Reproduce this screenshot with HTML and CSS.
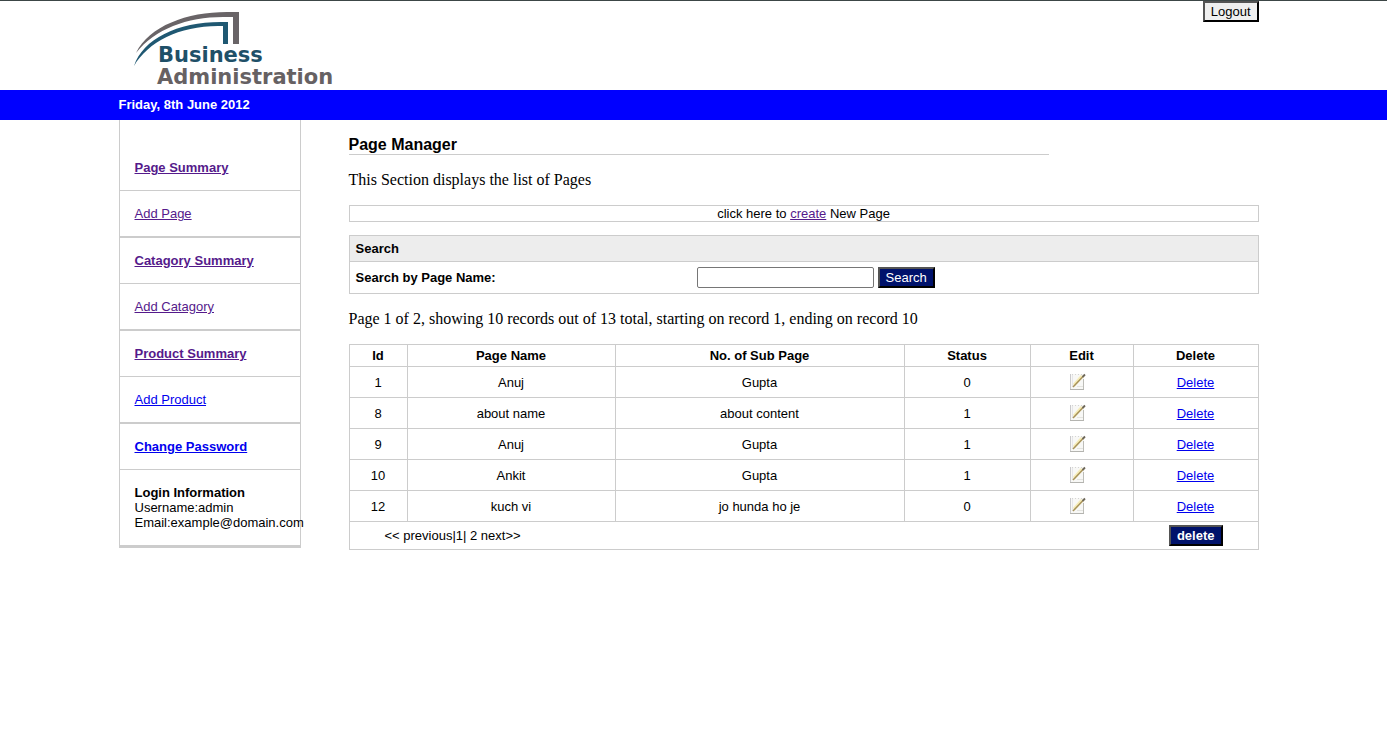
FILE: index.html
```html
<!DOCTYPE html>
<html lang="en">
<head>
<meta charset="utf-8">
<title>Page Manager</title>
<link rel="stylesheet" href="styles.css">
</head>
<body>
<svg class="defs" aria-hidden="true">
  <symbol id="edit" viewBox="0 0 26 22">
    <path d="M1 3h14v15H1z" fill="#f8f8f6"/>
    <path d="M1.500 3v15" stroke="#c9c9cc"/>
    <path d="M3.500 4v12" stroke="#e6e6ea"/>
    <path d="M1 18.500h14" stroke="#b4b4b0" />
    <path d="M14.500 8v10" stroke="#bdbdb8"/>
    <path d="M3 3.500h10" stroke="#d4d4d4" stroke-dasharray="1 2"/>
    <path d="M8 15.500h6" stroke="#e4e4e0"/>
    <path d="M5 14L13 5" stroke="#f6ecb8" stroke-width="3"/>
    <path d="M4 16L15 4.500" stroke="#a8935a" stroke-width="1.500"/>
    <path d="M13.500 6L16 3.500" stroke="#6d675a" stroke-width="1.800"/>
  </symbol>
</svg>
<header class="header">
  <div class="container header-row">
    <svg class="logo" width="220" height="78" viewBox="0 0 220 78" role="img" aria-label="Business Administration">
      <path d="M17 41C30 14 68 0 108 0h12v32h-6V5h-10C68 5 36 17 17 41z" fill="#696467"/>
      <path d="M15 54C24 27 58 10 102 10h7v22h-5V14h-5C60 14 29 30 15 54z" fill="#1f5872"/>
      <text x="39" y="50" class="logo-text logo-blue">Business</text>
      <text x="38" y="72" class="logo-text logo-gray">Administration</text>
    </svg>
    <button type="button" class="button logout">Logout</button>
  </div>
</header>
<div class="datebar"><div class="container">Friday, 8th June 2012</div></div>
<div class="container layout">
  <nav class="sidebar">
    <div class="item first"><a class="visited" href="#"><b>Page Summary</b></a></div>
    <div class="item last"><a class="visited" href="#">Add Page</a></div>
    <div class="item"><a class="visited" href="#"><b>Catagory Summary</b></a></div>
    <div class="item last"><a class="visited" href="#">Add Catagory</a></div>
    <div class="item"><a class="visited" href="#"><b>Product Summary</b></a></div>
    <div class="item last"><a href="#">Add Product</a></div>
    <div class="item"><a href="#"><b>Change Password</b></a></div>
    <div class="item login"><b>Login Information</b><br>Username:admin<br>Email:example@domain.com</div>
  </nav>
  <main class="main">
    <h1 class="title">Page Manager</h1>
    <p class="note">This Section displays the list of Pages</p>
    <div class="create">click here to <a class="visited" href="#">create</a> New Page</div>
    <form class="search">
      <h2 class="search-title">Search</h2>
      <div class="search-row">
        <label for="page-name">Search by Page Name:</label>
        <div class="search-controls">
          <input id="page-name" class="field" type="text">
          <button type="button" class="button navy">Search</button>
        </div>
      </div>
    </form>
    <p class="note">Page 1 of 2, showing 10 records out of 13 total, starting on record 1, ending on record 10</p>
    <table class="pages">
      <colgroup><col class="c-id"><col class="c-name"><col class="c-sub"><col class="c-status"><col class="c-edit"><col></colgroup>
      <thead>
        <tr><th>Id</th><th>Page Name</th><th>No. of Sub Page</th><th>Status</th><th>Edit</th><th>Delete</th></tr>
      </thead>
      <tbody>
        <tr><td>1</td><td>Anuj</td><td>Gupta</td><td>0</td><td><a href="#" aria-label="Edit"><svg class="edit"><use href="#edit"/></svg></a></td><td><a href="#">Delete</a></td></tr>
        <tr><td>8</td><td>about name</td><td>about content</td><td>1</td><td><a href="#" aria-label="Edit"><svg class="edit"><use href="#edit"/></svg></a></td><td><a href="#">Delete</a></td></tr>
        <tr><td>9</td><td>Anuj</td><td>Gupta</td><td>1</td><td><a href="#" aria-label="Edit"><svg class="edit"><use href="#edit"/></svg></a></td><td><a href="#">Delete</a></td></tr>
        <tr><td>10</td><td>Ankit</td><td>Gupta</td><td>1</td><td><a href="#" aria-label="Edit"><svg class="edit"><use href="#edit"/></svg></a></td><td><a href="#">Delete</a></td></tr>
        <tr><td>12</td><td>kuch vi</td><td>jo hunda ho je</td><td>0</td><td><a href="#" aria-label="Edit"><svg class="edit"><use href="#edit"/></svg></a></td><td><a href="#">Delete</a></td></tr>
      </tbody>
      <tfoot>
        <tr><td colspan="6"><div class="pager"><span>&lt;&lt; previous|1| 2 next&gt;&gt;</span><button type="button" class="button navy"><b>delete</b></button></div></td></tr>
      </tfoot>
    </table>
  </main>
</div>
</body>
</html>
```

FILE: styles.css
```css
* { box-sizing: border-box; }
body {
  margin: 0;
  background: #fff;
  color: #000;
  font: 13px/15px "Liberation Sans", Arial, sans-serif;
}
a { color: #00e; }
a.visited { color: #551a8b; }
.defs { display: none; }
.container {
  max-width: 1150px;
  margin: 0 auto;
  padding-right: 10px;
}
.header { border-top: 1px solid #3c4646; }
.header-row {
  display: flex;
  justify-content: space-between;
  align-items: flex-start;
  height: 89px;
}
.logo { margin-top: 11px; }
.logo-text { font: bold 21px "DejaVu Sans", sans-serif; }
.logo-blue { fill: #1f5068; }
.logo-gray { fill: #666163; }
.button {
  height: 21px;
  padding: 0 6px;
  border: 2px outset #000;
  border-radius: 0;
  background: #efefef;
  color: #000;
  font: 13px/15px "Liberation Sans", Arial, sans-serif;
}
.navy { background: #00126b; color: #fff; }
.datebar {
  background: #00f;
  color: #fff;
  font-weight: bold;
  padding: 7px 0 8px;
}
.layout {
  display: flex;
  align-items: flex-start;
  gap: 48px;
}
.sidebar {
  flex: none;
  width: 182px;
  border: 1px solid #ccc;
  border-width: 0 1px;
}
.item {
  padding: 15px;
  border-bottom: 1px solid #ccc;
}
.item.first { padding-top: 40px; }
.item.last { border-bottom-width: 2px; }
.item.login { border-bottom-width: 3px; }
.main { flex: 1; min-width: 0; }
.title {
  max-width: 700px;
  margin: 16px 0;
  border-bottom: 1px solid #ccc;
  font-size: 16px;
  line-height: 18px;
}
.note {
  margin: 16px 0;
  font: 16px/18px "Liberation Serif", "Times New Roman", serif;
}
.create {
  border: 1px solid #ccc;
  text-align: center;
}
.search {
  margin: 13px 0 16px;
  border: 1px solid #ccc;
}
.search-title {
  margin: 0;
  padding: 5px 6px;
  background: #ededed;
  border-bottom: 1px solid #ccc;
  font-size: 13px;
  line-height: 15px;
}
.search-row {
  display: grid;
  grid-template-columns: 3fr 5fr;
  column-gap: 8px;
  align-items: center;
  padding: 5px 6px;
  font-weight: bold;
}
.search-controls { display: flex; gap: 4px; }
.field {
  width: 177px;
  height: 21px;
  padding: 1px 2px;
  border: 1px solid #767676;
  border-radius: 2px;
  font: 13px/15px "Liberation Sans", Arial, sans-serif;
}
.pages {
  width: 100%;
  table-layout: fixed;
  border-collapse: collapse;
  text-align: center;
}
.pages th, .pages td {
  border: 1px solid #ccc;
  padding: 3px;
}
.pages tbody td { height: 31px; }
.c-id { width: 58px; }
.c-name { width: 208px; }
.c-sub { width: 289px; }
.c-status { width: 126px; }
.c-edit { width: 103px; }
.edit { display: block; width: 26px; height: 22px; margin: 0 auto; }
.pager {
  display: flex;
  justify-content: space-between;
  align-items: center;
  padding: 0 32px;
}
```
